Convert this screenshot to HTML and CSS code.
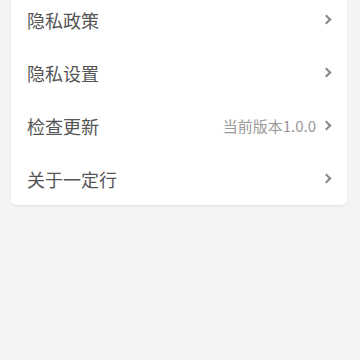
FILE: index.html
```html
<!DOCTYPE html>
<html>
<head>
<meta charset="utf-8">
<link rel="stylesheet" href="styles.css">
</head>
<body>
<div class="card">
  <div class="row"><span class="label">隐私政策</span><span class="right"><span class="chev"></span></span></div>
  <div class="row"><span class="label">隐私设置</span><span class="right"><span class="chev"></span></span></div>
  <div class="row"><span class="label">检查更新</span><span class="right"><span class="value">当前版本1.0.0</span><span class="chev"></span></span></div>
  <div class="row"><span class="label">关于一定行</span><span class="right"><span class="chev"></span></span></div>
</div>
</body>
</html>
```
FILE: styles.css
```css
html, body {
  margin: 0;
  padding: 0;
  background: #f4f4f4;
  width: 360px;
  height: 360px;
  overflow: hidden;
  font-family: "Noto Sans CJK SC", "Noto Sans", sans-serif;
}
.card {
  margin: -7px 13px 0 11px;
  background: #fff;
  border-radius: 5px;
  box-shadow: 0 1px 2px rgba(0,0,0,0.08);
}
.row {
  height: 53px;
  display: flex;
  align-items: center;
  justify-content: space-between;
  padding: 0 15px 0 16px;
}
.label {
  font-size: 18px;
  color: #555;
}
.right {
  display: flex;
  align-items: center;
  gap: 7px;
}
.value {
  font-size: 15px;
  color: #999;
}
.chev {
  width: 5px;
  height: 5px;
  border-top: 2px solid #888;
  border-right: 2px solid #888;
  transform: rotate(45deg);
  margin-right: 2px;
}
```
